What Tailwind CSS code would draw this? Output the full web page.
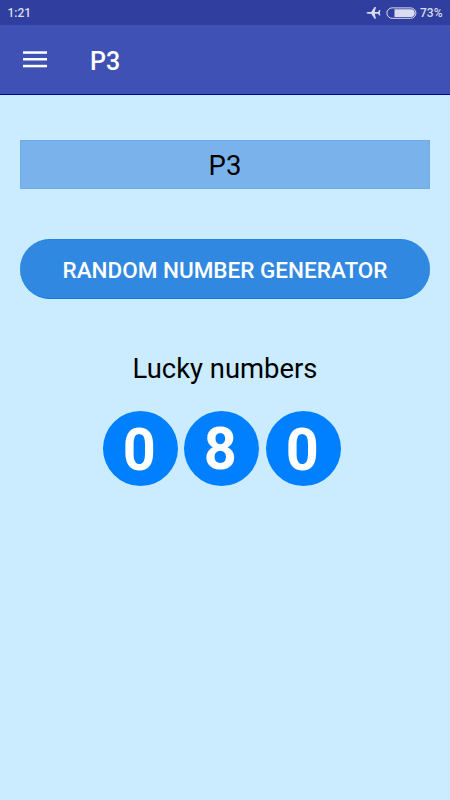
<!DOCTYPE html>
<html lang="en">
<head>
    <meta charset="UTF-8">
    <meta name="viewport" content="width=device-width, initial-scale=1.0">
    <title>P3</title>
    <script src="https://cdn.jsdelivr.net/npm/@tailwindcss/browser@4"></script>
</head>
<body class="bg-[#cbecff] font-[Roboto,sans-serif] h-screen overflow-hidden">
    <!-- status bar -->
    <div class="h-[25px] bg-[#303f9f] flex items-center justify-between pl-[7.5px] pr-[7.5px] text-[12px] font-medium text-[#dadcf0]">
        <span class="pt-px">1:21</span>
        <div class="flex items-center">
            <svg class="w-[15px] h-[14px] mr-[5px]" viewBox="0 0 15 14" fill="#dadcf0">
                <path d="M0.3 6.8 Q0.8 6 2.5 6 H5.2 L8.6 1 H10 L8.7 6 H12 L13.4 4 H14.4 L13.8 6.8 L14.4 9.6 H13.4 L12 7.7 H8.7 L10 12.8 H8.6 L5.2 7.7 H2.5 Q0.8 7.7 0.3 6.8 Z"/>
            </svg>
            <svg class="w-[31px] h-[12px] mr-[3px]" viewBox="0 0 31 12">
                <rect x="0.9" y="0.9" width="29" height="10.4" rx="5.2" fill="none" stroke="#dadcf0" stroke-width="1"/>
                <path d="M8.5 2.2 H24.8 A3.9 3.9 0 0 1 24.8 10 H8.5 Z" fill="#dadcf0"/>
            </svg>
            <span>73%</span>
        </div>
    </div>

    <!-- toolbar -->
    <header class="h-[70px] bg-[#3f51b5] border-b border-[#0000a0] flex items-center pl-[23px]">
        <svg class="w-6 h-[17px]" viewBox="0 0 24 17" fill="#fff">
            <rect y="0.3" width="24" height="2.5"/>
            <rect y="7" width="24" height="2.5"/>
            <rect y="13.8" width="24" height="2.5"/>
        </svg>
        <h1 class="ml-[43px] mt-[4px] text-[25px] leading-none font-medium text-white">P3</h1>
    </header>

    <main class="px-5 pt-[45px] flex flex-col">
        <div class="h-[49px] bg-[#7ab3ec] border border-[#6fabea] flex items-center justify-center pt-[3px] text-[27.5px] leading-none text-black">P3</div>

        <button class="mt-[50px] h-[60px] rounded-full bg-[#3188e0] border-y border-t-[#2583df] border-b-[#087de0] pt-[4px] text-[22.5px] font-medium text-white whitespace-nowrap">RANDOM NUMBER GENERATOR</button>

        <p class="mt-[54px] text-center text-[27.4px] leading-8 text-black">Lucky numbers</p>

        <div class="mt-[26px] ml-[83px] flex gap-[6.3px] text-[60px] leading-none font-bold text-white">
            <div class="w-[75px] h-[75px] rounded-full bg-[#0080ff] flex items-center justify-center pr-[2px] pt-[2px]"><span class="scale-x-[0.96]">0</span></div>
            <div class="w-[75px] h-[75px] rounded-full bg-[#0080ff] flex items-center justify-center pr-[3px]"><span class="scale-x-[0.96]">8</span></div>
            <div class="w-[75px] h-[75px] rounded-full bg-[#0080ff] flex items-center justify-center pr-[2px] pt-[2px]"><span class="scale-x-[0.96]">0</span></div>
        </div>
    </main>
</body>
</html>
